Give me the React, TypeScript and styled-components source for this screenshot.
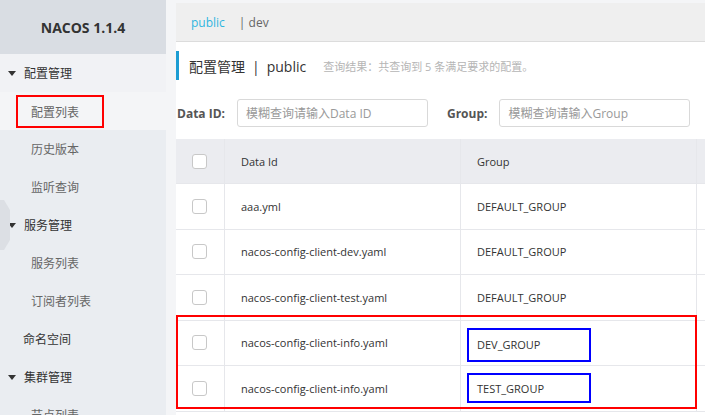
import React from "react";
import styled, { createGlobalStyle } from "styled-components";

const Global = createGlobalStyle`
  html, body { margin: 0; padding: 0; }
  body {
    font-family: "Open Sans", "Noto Sans CJK SC", sans-serif;
    font-size: 12px;
    color: #333;
    background: #f4f5f7;
  }
  * { box-sizing: border-box; }
`;

const Page = styled.div`
  display: flex;
  width: 705px;
  height: 415px;
  overflow: hidden;
`;

const Sidebar = styled.aside`
  position: relative;
  width: 166px;
  flex-shrink: 0;
  background: #eaedf1;
  display: flex;
  flex-direction: column;
  overflow: hidden;
  & > * { flex-shrink: 0; }
`;

const Logo = styled.div`
  height: 54px;
  background: #d9dde3;
  display: flex;
  align-items: center;
  justify-content: center;
  font-weight: 700;
  font-size: 14px;
  color: #333;
`;

const NavGroup = styled.div<{ $light?: boolean }>`
  height: 38px;
  display: flex;
  align-items: center;
  padding-left: 8px;
  gap: 8px;
  font-size: 12px;
  color: #333;
  background: ${(p) => (p.$light ? "#f1f2f5" : "transparent")};
`;

const NavLink = styled.div`
  height: 38px;
  display: flex;
  align-items: center;
  padding-left: 23px;
  font-size: 12px;
  color: #333;
`;

const NavSub = styled.div<{ $light?: boolean }>`
  height: 38px;
  display: flex;
  align-items: center;
  padding-left: 31px;
  font-size: 12px;
  color: #666;
  background: ${(p) => (p.$light ? "#f4f5f7" : "transparent")};
`;

const RedMark = styled.span`
  display: inline-flex;
  align-items: center;
  margin-left: -15px;
  margin-top: 1px;
  width: 88px;
  height: 33px;
  padding-left: 13px;
  border: 2.5px solid #f00;
  color: #666;
`;

const Caret = styled.span`
  width: 0;
  height: 0;
  border-left: 4px solid transparent;
  border-right: 4px solid transparent;
  border-top: 5px solid #333;
`;

const SideTab = styled.div`
  position: absolute;
  left: 0;
  top: 200px;
  width: 10px;
  height: 50px;
  background: #dcdfe4;
  clip-path: polygon(0 0, 40% 0, 100% 20%, 100% 80%, 40% 100%, 0 100%);
`;

const Main = styled.main`
  flex: 1;
  padding: 3px 0 0 10px;
  background: #f4f5f7;
  min-width: 0;
`;

const Panel = styled.div`
  background: #fff;
  height: 100%;
  display: flex;
  flex-direction: column;
`;

const TopBar = styled.div`
  height: 39px;
  flex-shrink: 0;
  background: #efefef;
  border-bottom: 1px solid #dcdcdc;
  display: flex;
  align-items: center;
  padding-left: 15px;
  font-size: 12px;
`;

const NsActive = styled.span`
  color: #2fb6df;
  margin-right: 14px;
`;

const NsItem = styled.span`
  color: #666;
`;

const TitleRow = styled.div`
  margin-top: 9px;
  height: 29px;
  flex-shrink: 0;
  border-left: 3px solid #1c9dd3;
  display: flex;
  align-items: center;
  padding-left: 10px;
`;

const Title = styled.span`
  font-size: 14px;
  color: #333;
`;

const Pipe = styled.span`
  margin: 0 7px;
`;

const Info = styled.span`
  margin-left: 17px;
  font-size: 11px;
  color: #b5b5b5;
`;

const FilterRow = styled.div`
  margin-top: 19px;
  height: 28px;
  flex-shrink: 0;
  display: flex;
  align-items: center;
`;

const Label = styled.label<{ $gap: number }>`
  font-weight: 700;
  font-size: 12px;
  color: #555;
  margin-left: ${(p) => p.$gap}px;
  margin-right: 12px;
  white-space: nowrap;
`;

const Input = styled.div`
  width: 191px;
  height: 28px;
  border: 1px solid #d9d9d9;
  border-radius: 3px;
  display: flex;
  align-items: center;
  padding-left: 8px;
  color: #999;
  font-size: 12px;
`;

const TableWrap = styled.div`
  position: relative;
  margin-top: 12px;
`;

const Table = styled.div`
  display: grid;
  grid-template-columns: 49px 236px 236px 60px;
  width: 581px;
`;

const Cell = styled.div<{ $head?: boolean }>`
  height: ${(p) => (p.$head ? 45 : 45.5)}px;
  display: flex;
  align-items: center;
  padding-left: 16px;
  background: ${(p) => (p.$head ? "#ebecf0" : "#fff")};
  border-bottom: 1px solid #e6e7eb;
  border-right: 1px solid #e6e7eb;
  font-size: 11px;
  color: #333;
  white-space: nowrap;
`;

const Check = styled.span`
  width: 15px;
  height: 15px;
  border: 1px solid #c8c8c8;
  border-radius: 3px;
  background: #fff;
`;

const BlueMark = styled.span<{ $h: number; $dy: number }>`
  display: inline-flex;
  align-items: center;
  margin-left: -10px;
  margin-top: ${(p) => p.$dy}px;
  width: 124px;
  height: ${(p) => p.$h}px;
  padding-left: 8px;
  border: 2px solid #00f;
`;

const RedBox = styled.div`
  position: absolute;
  left: 0;
  top: 176px;
  width: 521px;
  height: 94px;
  border: 2.5px solid #f00;
  pointer-events: none;
`;

const rows: { id: string; group: string; mark?: { h: number; dy: number } }[] = [
  { id: "aaa.yml", group: "DEFAULT_GROUP" },
  { id: "nacos-config-client-dev.yaml", group: "DEFAULT_GROUP" },
  { id: "nacos-config-client-test.yaml", group: "DEFAULT_GROUP" },
  { id: "nacos-config-client-info.yaml", group: "DEV_GROUP", mark: { h: 34, dy: 4 } },
  { id: "nacos-config-client-info.yaml", group: "TEST_GROUP", mark: { h: 30, dy: 0 } },
];

export default function App() {
  return (
    <Page>
      <Global />
      <Sidebar>
        <Logo>NACOS 1.1.4</Logo>
        <NavGroup $light>
          <Caret />
          配置管理
        </NavGroup>
        <NavSub $light>
          <RedMark>配置列表</RedMark>
        </NavSub>
        <NavSub>历史版本</NavSub>
        <NavSub>监听查询</NavSub>
        <NavGroup>
          <Caret />
          服务管理
        </NavGroup>
        <NavSub>服务列表</NavSub>
        <NavSub>订阅者列表</NavSub>
        <NavLink>命名空间</NavLink>
        <NavGroup>
          <Caret />
          集群管理
        </NavGroup>
        <NavSub>节点列表</NavSub>
        <SideTab />
      </Sidebar>
      <Main>
        <Panel>
          <TopBar>
            <NsActive>public</NsActive>
            <NsItem>| dev</NsItem>
          </TopBar>
          <TitleRow>
            <Title>
              配置管理<Pipe>|</Pipe>public
            </Title>
            <Info>查询结果：共查询到 5 条满足要求的配置。</Info>
          </TitleRow>
          <FilterRow>
            <Label $gap={1}>Data ID:</Label>
            <Input>模糊查询请输入Data ID</Input>
            <Label $gap={19}>Group:</Label>
            <Input>模糊查询请输入Group</Input>
          </FilterRow>
          <TableWrap>
            <Table>
              <Cell $head>
                <Check />
              </Cell>
              <Cell $head>Data Id</Cell>
              <Cell $head>Group</Cell>
              <Cell $head />
              {rows.map((r, i) => (
                <React.Fragment key={i}>
                  <Cell>
                    <Check />
                  </Cell>
                  <Cell>{r.id}</Cell>
                  <Cell>
                    {r.mark ? (
                      <BlueMark $h={r.mark.h} $dy={r.mark.dy}>
                        {r.group}
                      </BlueMark>
                    ) : (
                      r.group
                    )}
                  </Cell>
                  <Cell />
                </React.Fragment>
              ))}
            </Table>
            <RedBox />
          </TableWrap>
        </Panel>
      </Main>
    </Page>
  );
}
